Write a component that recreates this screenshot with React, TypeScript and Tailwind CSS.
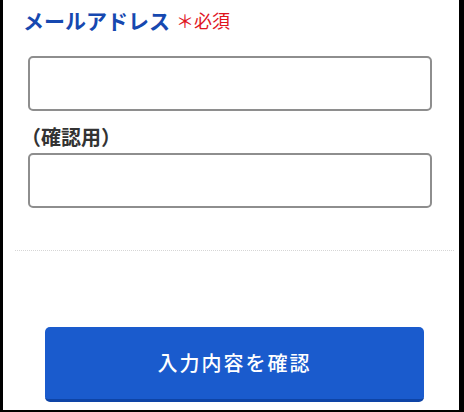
export default function App() {
  return (
    <div
      className="w-[464px] h-[412px] bg-black pl-[3px] pr-[5px] pb-[2px] overflow-hidden"
      style={{ fontFamily: '"Noto Sans CJK JP", "Noto Sans", sans-serif' }}
    >
      <div className="h-full bg-white flex flex-col">
        <div className="pt-[8px] pl-[20px] flex items-end gap-[6px]">
          <h2 className="text-[21px] leading-[24px] font-bold text-[#1648b0]">メールアドレス</h2>
          <span className="text-[18px] leading-[24px] text-[#e0141e]">＊必須</span>
        </div>

        <div className="px-[25px]">
          <input type="email" className="mt-[24px] block w-[404px] h-[55px] rounded-[5px] border-2 border-[#8e8e8e] bg-white" />

          <p className="mt-[14px] -ml-[7px] text-[20px] leading-[24px] font-bold text-[#333]">（確認用）</p>

          <input type="email" className="mt-[4px] block w-[404px] h-[55px] rounded-[5px] border-2 border-[#8e8e8e] bg-white" />
        </div>

        <div className="mt-[42px] ml-[12px] mr-[5px] border-t border-dotted border-[#d6d6d6]" />

        <div className="mt-[76px] pl-[42px]">
          <button className="w-[379px] h-[75px] rounded-[5px] bg-[#1a5bcd] border-b-[3px] border-[#0e44a6] text-white text-[20px] font-medium tracking-[2px] leading-none">
            入力内容を確認
          </button>
        </div>
      </div>
    </div>
  )
}
